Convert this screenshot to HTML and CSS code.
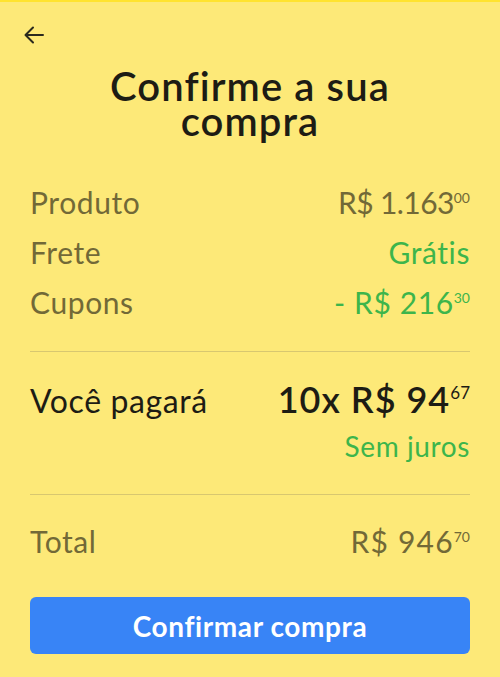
FILE: index.html
```html
<!DOCTYPE html>
<html lang="pt-BR">
<head>
<meta charset="utf-8">
<title>Confirme a sua compra</title>
<link rel="stylesheet" href="styles.css">
</head>
<body>
<div class="page">
  <header class="header">
    <svg class="back" width="24" height="24" viewBox="0 0 24 24" aria-label="Voltar">
      <path d="M21 12H4M11 4.5L3.5 12L11 19.5" fill="none" stroke="#2b2a1e" stroke-width="2" stroke-linecap="round" stroke-linejoin="round"/>
    </svg>
  </header>
  <h1 class="title">Confirme a sua<br>compra</h1>
  <section class="summary">
    <div class="row"><span class="label">Produto</span><span class="value tight">R$ 1.163<span class="cents">00</span></span></div>
    <div class="row"><span class="label">Frete</span><span class="value green">Grátis</span></div>
    <div class="row"><span class="label">Cupons</span><span class="value green">- R$ 216<span class="cents">30</span></span></div>
  </section>
  <hr class="divider">
  <section class="pay">
    <div class="pay-row"><span class="pay-label">Você pagará</span><span class="pay-value">10x R$ 94<span class="cents-big">67</span></span></div>
    <div class="pay-note">Sem juros</div>
  </section>
  <hr class="divider">
  <div class="row total"><span class="label">Total</span><span class="value wide">R$ 946<span class="cents">70</span></span></div>
  <button class="confirm">Confirmar compra</button>
</div>
</body>
</html>
```
FILE: styles.css
```css
html, body {
  margin: 0;
  padding: 0;
}
body {
  background: #fde978;
  font-family: Lato, "Open Sans", sans-serif;
  border-top: 2px solid #ffe330;
  min-height: 675px;
}
.page {
  padding: 0 30px;
}
.header {
  height: 67px;
  box-sizing: border-box;
  padding-top: 21px;
  margin-left: -8px;
}
.back {
  display: block;
}
.title {
  margin: 0;
  text-align: center;
  font-size: 40px;
  line-height: 35px;
  font-weight: 600;
  color: #1d1c14;
  letter-spacing: 1.1px;
}
.summary {
  margin-top: 38px;
}
.row {
  display: flex;
  justify-content: space-between;
  align-items: baseline;
  height: 50px;
  line-height: 50px;
  font-size: 30px;
  letter-spacing: 0.6px;
  color: #726937;
}
.label {
  font-weight: 400;
}
.value {
  font-weight: 400;
}
.tight {
  letter-spacing: -0.6px;
}
.wide {
  letter-spacing: 1.2px;
}
.green {
  color: #3db54b;
}
.cents {
  font-size: 14px;
  letter-spacing: 0;
  vertical-align: 11px;
  line-height: 0;
}
.divider {
  margin: 24px 0 0;
  border: 0;
  height: 1px;
  background: #d8c770;
}
.pay {
  padding-top: 25px;
}
.pay-row {
  display: flex;
  justify-content: space-between;
  align-items: baseline;
  line-height: 44px;
  height: 44px;
  color: #1d1c14;
}
.pay-label {
  font-size: 32px;
  letter-spacing: 0.6px;
}
.pay-value {
  font-size: 36px;
  font-weight: 600;
  letter-spacing: 1px;
}
.cents-big {
  font-size: 17px;
  font-weight: 400;
  letter-spacing: 0;
  vertical-align: 14px;
  line-height: 0;
}
.pay-note {
  text-align: right;
  font-size: 28px;
  letter-spacing: 0.6px;
  line-height: 51px;
  color: #3db54b;
}
.pay + .divider {
  margin-top: 22px;
}
.total {
  margin-top: 21px;
}
.confirm {
  display: block;
  width: 100%;
  height: 57px;
  margin-top: 31px;
  border: 0;
  border-radius: 6px;
  background: #3884f6;
  color: #ffffff;
  font-family: Lato, "Open Sans", sans-serif;
  font-size: 28px;
  letter-spacing: 0.6px;
  font-weight: 700;
}
```
